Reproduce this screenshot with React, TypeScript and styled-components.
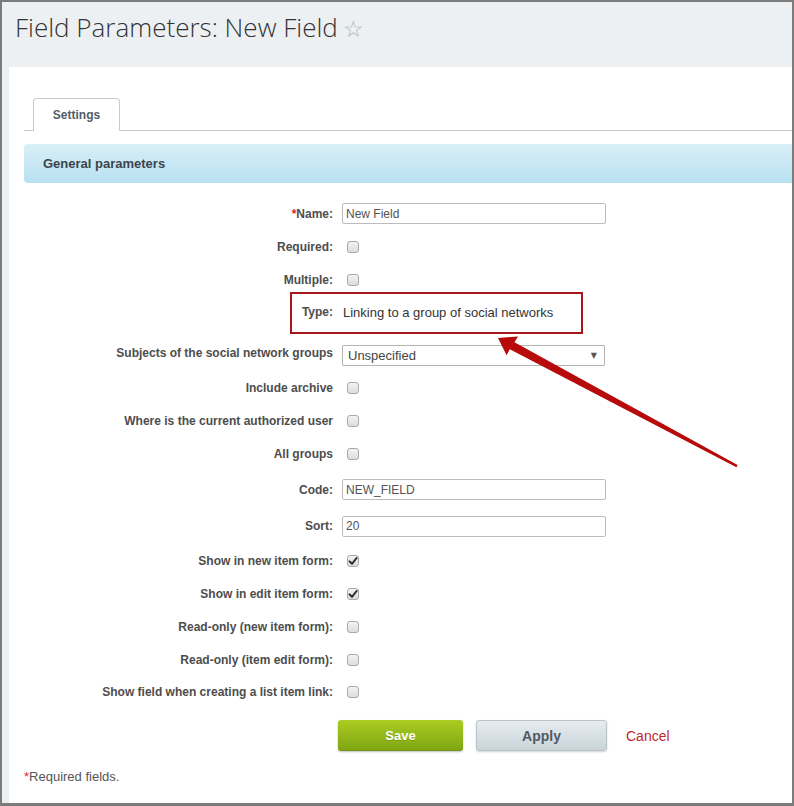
import React from "react";
import styled, { createGlobalStyle } from "styled-components";

const Global = createGlobalStyle`
  html, body { margin: 0; padding: 0; background: #fff; }
  body { font-family: "Liberation Sans", Arial, sans-serif; }
  * { box-sizing: border-box; }
`;

const Frame = styled.div`
  position: relative;
  width: 794px;
  height: 806px;
  border: 2px solid #7b7b7b;
  border-bottom-width: 3px;
  background: #edf0f3;
  display: flex;
  flex-direction: column;
  overflow: hidden;
`;

const PageHeader = styled.header`
  height: 65px;
  flex: none;
  padding: 7px 0 0 13px;
`;

const Title = styled.h1`
  margin: 0;
  font-family: "Open Sans", sans-serif;
  font-weight: 300;
  font-size: 26px;
  line-height: 36px;
  color: #333;
  display: flex;
  align-items: baseline;
  gap: 5px;
`;

const Star = styled.span`
  font-family: "DejaVu Sans", sans-serif;
  font-size: 23px;
  color: #b0b4b8;
`;

const Panel = styled.main`
  flex: 1;
  margin-left: 7px;
  background: #fff;
  padding: 31px 0 0 15px;
  display: flex;
  flex-direction: column;
`;

const TabBar = styled.div`
  display: flex;
  border-bottom: 1px solid #c5cdd2;
  padding-left: 9px;
`;

const Tab = styled.div`
  width: 87px;
  height: 33px;
  margin-bottom: -1px;
  border: 1px solid #c5cdd2;
  border-bottom: none;
  border-radius: 4px 4px 0 0;
  background: #fff;
  display: flex;
  align-items: center;
  justify-content: center;
  font-size: 12px;
  font-weight: bold;
  color: #535c69;
`;

const SectionHeader = styled.div`
  margin-top: 13px;
  height: 39px;
  border-radius: 4px 0 0 4px;
  background: linear-gradient(to bottom, #d9eff7, #b8e0f1);
  display: flex;
  align-items: center;
  padding-left: 19px;
  font-size: 13px;
  font-weight: bold;
  color: #3b454e;
`;

const Form = styled.div`
  margin-top: 14px;
  display: flex;
  flex-direction: column;
`;

const Row = styled.div<{ $h: number; $after?: number }>`
  position: relative;
  height: ${(p) => p.$h}px;
  margin-bottom: ${(p) => p.$after ?? 0}px;
  display: grid;
  grid-template-columns: 309px 1fr;
  column-gap: 9px;
  align-items: center;
`;

const Label = styled.div`
  text-align: right;
  font-size: 12px;
  font-weight: bold;
  color: #4d4d4d;
  white-space: nowrap;
`;

const Req = styled.span`
  color: #e0262b;
`;

const Value = styled.div`
  display: flex;
  align-items: center;
  font-size: 13px;
  color: #333;
`;

const TypeText = styled.span`
  margin-left: 1px;
`;

const TextInput = styled.input`
  width: 264px;
  height: 21px;
  border: 1px solid #bcbcbc;
  border-radius: 2px;
  padding: 0 0 0 3px;
  font-family: "Liberation Sans", Arial, sans-serif;
  font-size: 12px;
  color: #535353;
  background: #fff;
  outline: none;
`;

const SelectBox = styled.div`
  width: 263px;
  height: 21px;
  border: 1px solid #b4b4b4;
  border-radius: 1px;
  padding: 0 7px 0 5px;
  display: flex;
  align-items: center;
  justify-content: space-between;
  font-size: 13px;
  color: #444;
  margin-top: 4px;
`;

const Caret = styled.span`
  font-family: "DejaVu Sans", sans-serif;
  font-size: 8px;
  color: #555;
`;

const Box = styled.span`
  width: 12px;
  height: 12px;
  margin-left: 5px;
  border: 1px solid #a9a9a9;
  border-radius: 3px;
  background: linear-gradient(to bottom, #f3f3f3, #dcdcdc);
  display: flex;
  align-items: center;
  justify-content: center;
`;

const Highlight = styled.div`
  position: absolute;
  left: 266px;
  top: -4px;
  width: 293px;
  height: 42px;
  border: 2px solid #a8151a;
  pointer-events: none;
`;

const Buttons = styled.div`
  margin-top: 12px;
  padding-left: 314px;
  display: flex;
  align-items: center;
`;

const SaveButton = styled.button`
  width: 125px;
  height: 31px;
  border: none;
  border-bottom: 1px solid #72961a;
  border-radius: 3px;
  background: linear-gradient(to bottom, #abcc20, #7fa613);
  box-shadow: 0 1px 2px rgba(0, 0, 0, 0.25);
  font-family: "Liberation Sans", Arial, sans-serif;
  font-size: 13px;
  font-weight: bold;
  color: #fff;
  text-shadow: 0 1px 0 rgba(0, 0, 0, 0.15);
`;

const ApplyButton = styled.button`
  margin-left: 13px;
  width: 131px;
  height: 31px;
  border: 1px solid #b9c3c8;
  border-radius: 3px;
  background: linear-gradient(to bottom, #e6ecef, #c9d4d9);
  box-shadow: 0 1px 2px rgba(0, 0, 0, 0.18);
  font-family: "Liberation Sans", Arial, sans-serif;
  font-size: 14px;
  font-weight: bold;
  color: #505a63;
`;

const CancelLink = styled.a`
  margin-left: 19px;
  font-size: 14px;
  color: #c3272d;
  text-decoration: none;
`;

const Footnote = styled.div`
  margin-top: 19px;
  font-size: 13px;
  line-height: 14px;
  color: #555;
`;

const Overlay = styled.svg`
  position: absolute;
  left: -2px;
  top: -2px;
  pointer-events: none;
`;

const Check = ({ checked }: { checked?: boolean }) => (
  <Box>
    {checked && (
      <svg width="10" height="10" viewBox="0 0 10 10">
        <path d="M1.6 5.4 L4 7.8 L8.6 2" fill="none" stroke="#2b2b2b" strokeWidth="2" strokeLinecap="round" strokeLinejoin="round" />
      </svg>
    )}
  </Box>
);

type Field =
  | { kind: "text"; label: string; value: string; h: number; req?: boolean }
  | { kind: "check"; label: string; checked?: boolean; h: number }
  | { kind: "select"; label: string; value: string; h: number }
  | { kind: "type"; label: string; value: string; h: number; after: number };

const fields: Field[] = [
  { kind: "text", label: "Name:", value: "New Field", h: 33, req: true },
  { kind: "check", label: "Required:", h: 33 },
  { kind: "check", label: "Multiple:", h: 33 },
  { kind: "type", label: "Type:", value: "Linking to a group of social networks", h: 32, after: 6 },
  { kind: "select", label: "Subjects of the social network groups", value: "Unspecified", h: 38 },
  { kind: "check", label: "Include archive", h: 32 },
  { kind: "check", label: "Where is the current authorized user", h: 33 },
  { kind: "check", label: "All groups", h: 34 },
  { kind: "text", label: "Code:", value: "NEW_FIELD", h: 37 },
  { kind: "text", label: "Sort:", value: "20", h: 36 },
  { kind: "check", label: "Show in new item form:", checked: true, h: 33 },
  { kind: "check", label: "Show in edit item form:", checked: true, h: 33 },
  { kind: "check", label: "Read-only (new item form):", h: 33 },
  { kind: "check", label: "Read-only (item edit form):", h: 33 },
  { kind: "check", label: "Show field when creating a list item link:", h: 32 },
];

export default function App() {
  return (
    <>
      <Global />
      <Frame>
        <PageHeader>
          <Title>
            Field Parameters: New Field <Star>☆</Star>
          </Title>
        </PageHeader>
        <Panel>
          <TabBar>
            <Tab>Settings</Tab>
          </TabBar>
          <SectionHeader>General parameters</SectionHeader>
          <Form>
            {fields.map((f) => (
              <Row key={f.label} $h={f.h} $after={f.kind === "type" ? f.after : 0}>
                <Label>
                  {f.kind === "text" && f.req && <Req>*</Req>}
                  {f.label}
                </Label>
                <Value>
                  {f.kind === "text" && <TextInput defaultValue={f.value} readOnly />}
                  {f.kind === "check" && <Check checked={f.checked} />}
                  {f.kind === "select" && (
                    <SelectBox>
                      <span>{f.value}</span>
                      <Caret>▼</Caret>
                    </SelectBox>
                  )}
                  {f.kind === "type" && <TypeText>{f.value}</TypeText>}
                </Value>
                {f.kind === "type" && <Highlight />}
              </Row>
            ))}
          </Form>
          <Buttons>
            <SaveButton>Save</SaveButton>
            <ApplyButton>Apply</ApplyButton>
            <CancelLink href="#">Cancel</CancelLink>
          </Buttons>
          <Footnote>
            <Req>*</Req>Required fields.
          </Footnote>
        </Panel>
        <Overlay width="794" height="806" viewBox="0 0 794 806">
          <polygon
            points="498,338 518,336.5 514.5,342.2 737.6,465 736.4,467.2 509.8,349.3 506.6,355.2"
            fill="#b70a0a"
          />
        </Overlay>
      </Frame>
    </>
  );
}
